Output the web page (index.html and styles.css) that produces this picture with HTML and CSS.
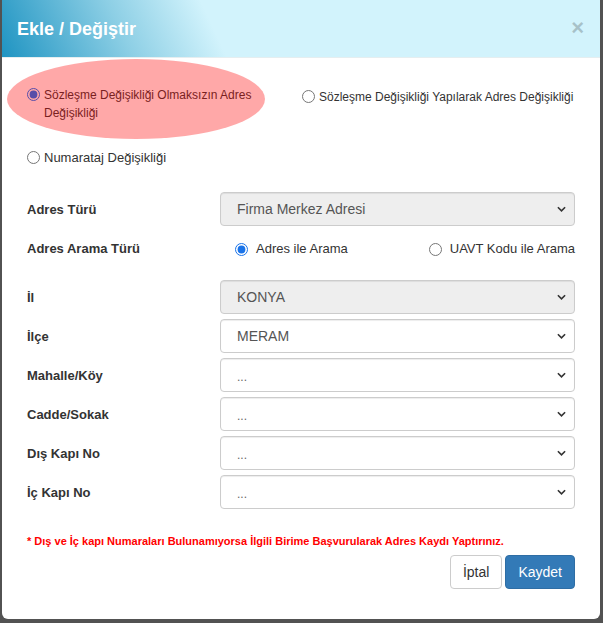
FILE: index.html
```html
<!DOCTYPE html>
<html lang="tr">
<head>
<meta charset="utf-8">
<title>Ekle / Değiştir</title>
<link rel="stylesheet" href="styles.css">
</head>
<body>
<div class="modal">
  <div class="modal-header">
    <h4 class="title">Ekle / Değiştir</h4>
    <span class="close">×</span>
  </div>
  <div class="modal-body">
    <div class="mark"></div>
    <div class="types">
      <label class="opt"><input type="radio" name="tip" checked><span>Sözleşme Değişikliği Olmaksızın Adres Değişikliği</span></label>
      <label class="opt opt-right"><input type="radio" name="tip"><span>Sözleşme Değişikliği Yapılarak Adres Değişikliği</span></label>
      <label class="opt opt-big"><input type="radio" name="tip"><span>Numarataj Değişikliği</span></label>
    </div>

    <div class="row first">
      <div class="lbl">Adres Türü</div>
      <div class="sel disabled"><span class="val">Firma Merkez Adresi</span><svg class="chev" viewBox="0 0 10 6" width="9" height="6"><path d="M1 1l4 4 4-4" fill="none" stroke="#333" stroke-width="1.8"/></svg></div>
    </div>
    <div class="row search">
      <div class="lbl">Adres Arama Türü</div>
      <div class="radios">
        <label class="opt2"><input type="radio" name="arama" checked><span>Adres ile Arama</span></label>
        <label class="opt2"><input type="radio" name="arama"><span>UAVT Kodu ile Arama</span></label>
      </div>
    </div>

    <div class="group">
      <div class="row">
        <div class="lbl">İl</div>
        <div class="sel disabled"><span class="val">KONYA</span><svg class="chev" viewBox="0 0 10 6" width="9" height="6"><path d="M1 1l4 4 4-4" fill="none" stroke="#333" stroke-width="1.8"/></svg></div>
      </div>
      <div class="row">
        <div class="lbl">İlçe</div>
        <div class="sel"><span class="val">MERAM</span><svg class="chev" viewBox="0 0 10 6" width="9" height="6"><path d="M1 1l4 4 4-4" fill="none" stroke="#333" stroke-width="1.8"/></svg></div>
      </div>
      <div class="row">
        <div class="lbl">Mahalle/Köy</div>
        <div class="sel"><span class="val dots">...</span><svg class="chev" viewBox="0 0 10 6" width="9" height="6"><path d="M1 1l4 4 4-4" fill="none" stroke="#333" stroke-width="1.8"/></svg></div>
      </div>
      <div class="row">
        <div class="lbl">Cadde/Sokak</div>
        <div class="sel"><span class="val dots">...</span><svg class="chev" viewBox="0 0 10 6" width="9" height="6"><path d="M1 1l4 4 4-4" fill="none" stroke="#333" stroke-width="1.8"/></svg></div>
      </div>
      <div class="row">
        <div class="lbl">Dış Kapı No</div>
        <div class="sel"><span class="val dots">...</span><svg class="chev" viewBox="0 0 10 6" width="9" height="6"><path d="M1 1l4 4 4-4" fill="none" stroke="#333" stroke-width="1.8"/></svg></div>
      </div>
      <div class="row">
        <div class="lbl">İç Kapı No</div>
        <div class="sel"><span class="val dots">...</span><svg class="chev" viewBox="0 0 10 6" width="9" height="6"><path d="M1 1l4 4 4-4" fill="none" stroke="#333" stroke-width="1.8"/></svg></div>
      </div>
    </div>

    <p class="note">* Dış ve İç kapı Numaraları Bulunamıyorsa İlgili Birime Başvurularak Adres Kaydı Yaptırınız.</p>

    <div class="actions">
      <button class="btn btn-default">İptal</button>
      <button class="btn btn-primary">Kaydet</button>
    </div>
  </div>
</div>
</body>
</html>
```

FILE: styles.css
```css
* { box-sizing: border-box; }

html, body {
  margin: 0;
  padding: 0;
  background: #525252;
  font-family: "Liberation Sans", Arial, sans-serif;
  color: #333;
}

body {
  width: 603px;
  height: 623px;
  overflow: hidden;
}

.modal {
  margin-left: 2px;
  width: 598px;
  height: 619px;
  background: #fff;
  border-radius: 0 0 6px 6px;
  overflow: hidden;
}

.modal-header {
  height: 58px;
  display: flex;
  align-items: center;
  justify-content: space-between;
  padding: 0 15px;
  background: linear-gradient(65deg, #1f94c2 0%, #8dcfe5 21%, #d2f3fc 36%, #d2f3fc 100%);
  border-bottom: 1px solid #e5eef0;
}

.title {
  margin: 0;
  font-size: 18px;
  font-weight: bold;
  color: #fff;
  line-height: 20px;
  padding-top: 1px;
}

.close {
  font-size: 22px;
  font-weight: bold;
  line-height: 1;
  color: #000;
  opacity: 0.2;
  margin-right: 1px;
  margin-top: -2px;
}

.modal-body {
  position: relative;
  padding: 28px 25px 30px 25px;
}

.mark {
  position: absolute;
  left: 5px;
  top: 1px;
  width: 258px;
  height: 80px;
  border-radius: 50%;
  background: rgba(255, 0, 0, 0.34);
  pointer-events: none;
  z-index: 2;
}

.types {
  display: grid;
  grid-template-columns: 275px 1fr;
  row-gap: 27px;
  font-size: 12px;
  line-height: 18px;
}

.opt {
  display: flex;
  align-items: flex-start;
}

.opt input,
.opt2 input {
  width: 13px;
  height: 13px;
  margin: 2px 4px 0 0;
  flex: none;
}

.opt-right {
  padding-top: 2px;
}

.opt-big {
  font-size: 13px;
}

.row {
  display: grid;
  grid-template-columns: 193px 1fr;
  align-items: center;
  height: 34px;
  margin-top: 5px;
}

.row.first {
  margin-top: 25px;
}

.row.search {
  margin-top: 5px;
}

.group {
  margin-top: 15px;
}

.group .row:first-child {
  margin-top: 0;
}

.lbl {
  font-size: 13px;
  font-weight: bold;
  color: #333;
}

.sel {
  display: flex;
  align-items: center;
  justify-content: space-between;
  height: 34px;
  padding: 0 8px 0 16px;
  border: 1px solid #ccc;
  border-radius: 4px;
  background: #fff;
  box-shadow: inset 0 1px 1px rgba(0, 0, 0, 0.075);
  font-size: 14px;
  color: #555;
}

.sel.disabled {
  background: #eee;
}

.val.dots {
  font-size: 12px;
  padding-top: 4px;
  color: #666;
}

.chev {
  flex: none;
}

.radios {
  display: flex;
  justify-content: space-between;
  align-items: center;
  font-size: 13px;
}

.opt2 {
  display: flex;
  align-items: center;
}

.opt2 input {
  margin: 2px 8px 0 15px;
  accent-color: #1a73e8;
}

.note {
  margin: 25px 0 0 0;
  font-size: 11px;
  line-height: 14px;
  font-weight: bold;
  color: #f00;
}

.actions {
  display: flex;
  justify-content: flex-end;
  gap: 3px;
  margin-top: 7px;
}

.btn {
  height: 34px;
  padding: 0 12px;
  font-family: "Liberation Sans", Arial, sans-serif;
  font-size: 14px;
  border-radius: 4px;
  border: 1px solid #ccc;
  line-height: 32px;
}

.btn-default {
  background: #fff;
  color: #333;
}

.btn-primary {
  background: #337ab7;
  border-color: #2e6da4;
  color: #fff;
}
```
